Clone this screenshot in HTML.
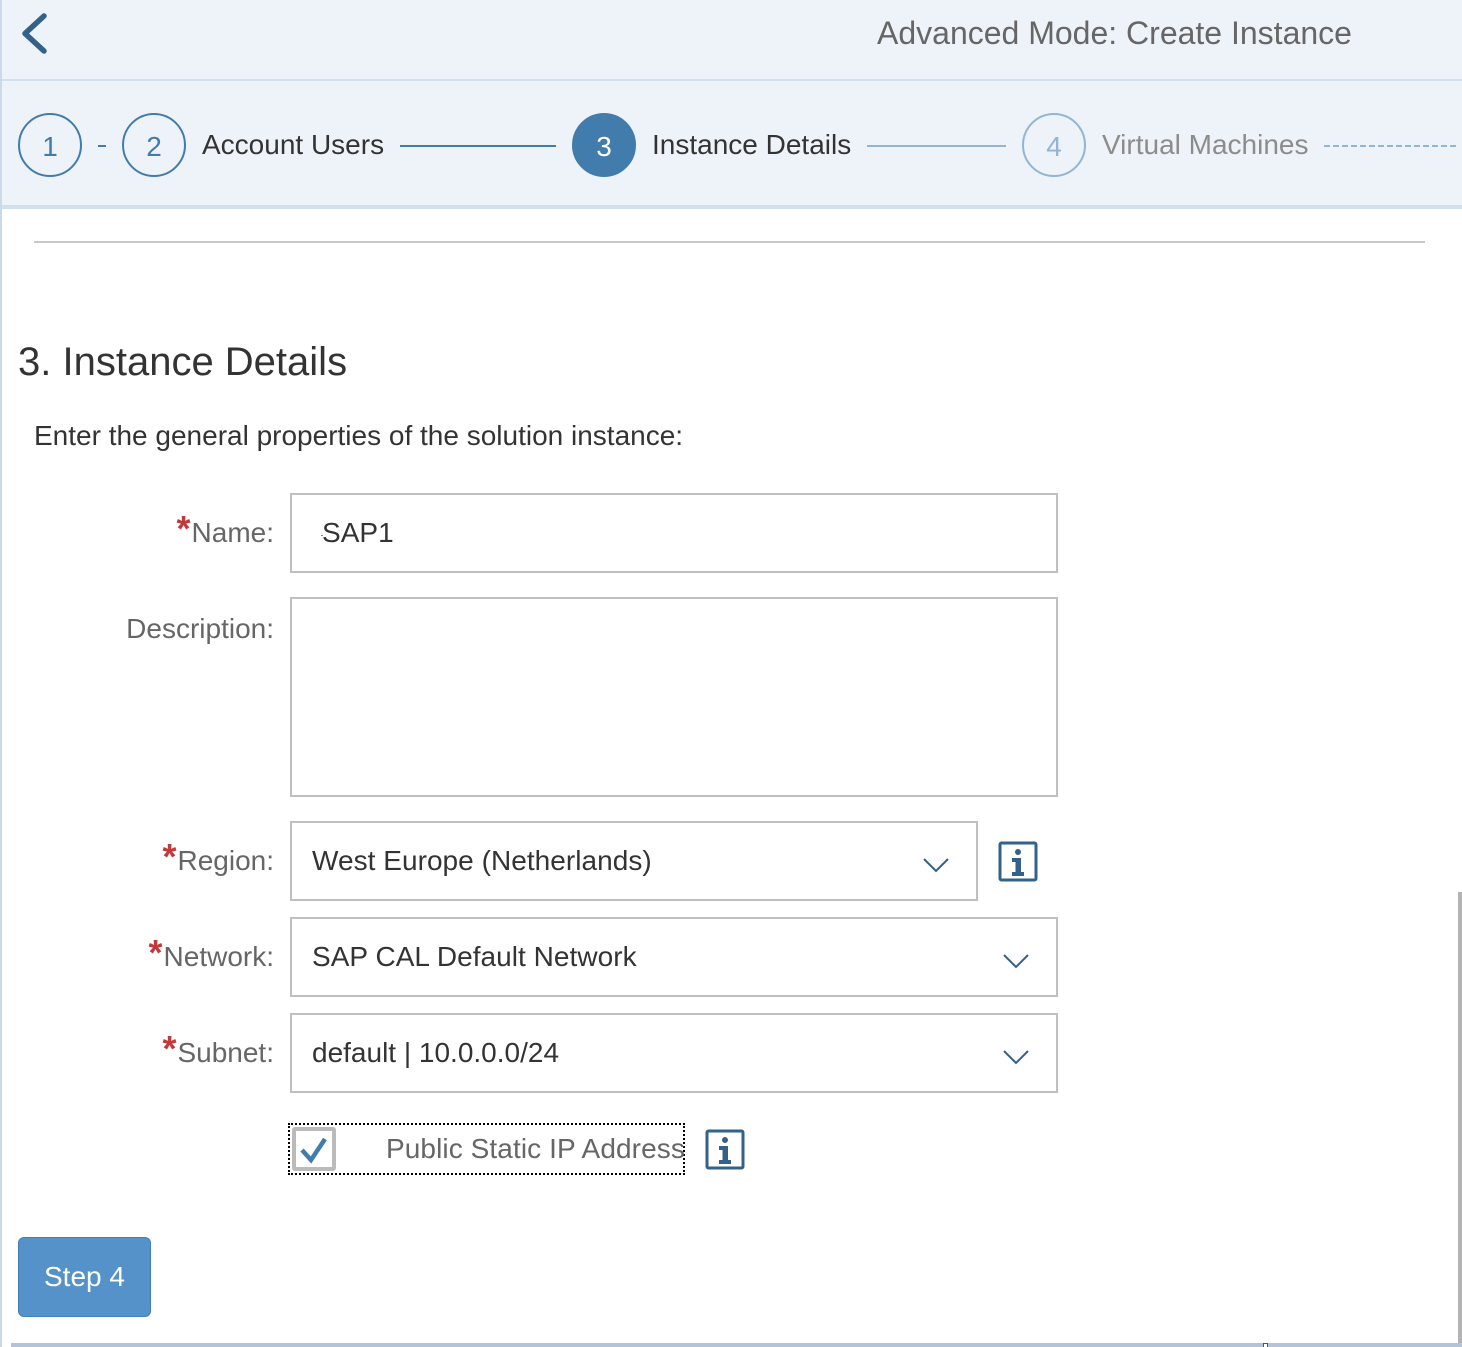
<!DOCTYPE html>
<html><head><meta charset="utf-8"><style>
html,body{margin:0;padding:0;width:1462px;height:1347px;overflow:hidden;background:#fff;font-family:"Liberation Sans",Arial,sans-serif}
.a{position:absolute;box-sizing:border-box}
.t{position:absolute;white-space:nowrap;line-height:40px;height:40px}
.c{position:absolute;box-sizing:border-box;width:64px;height:64px;border-radius:50%;border:2px solid #427cac;text-align:center;line-height:63px;font-size:28px;color:#427cac;top:113px}
.l{font-size:28px;color:#666;right:1188px}
.star{color:#c0393d;font-size:36px;font-weight:bold;line-height:34px;position:relative;top:-1px;display:inline-block;height:28px;vertical-align:baseline;margin-right:1px}
.box{position:absolute;box-sizing:border-box;border:2px solid #bfbfbf;background:#fff}
.v{font-size:28px;color:#333;letter-spacing:.04px}
</style></head><body>
<div class="a" style="left:0;top:0;width:1462px;height:209px;background:#eef3fa"></div>
<div class="a" style="left:0;top:79px;width:1462px;height:2px;background:#d1dfee"></div>
<div class="a" style="left:0;top:205px;width:1462px;height:4px;background:#d1dfee"></div>
<div class="a" style="left:0;top:0;width:2px;height:1347px;background:#ccd9ea"></div>
<div class="a" style="left:1458px;top:892px;width:4px;height:451px;background:#b3b3b3"></div>
<div class="a" style="left:11px;top:1343px;width:1451px;height:4px;background:#b4c3d8"></div>
<div class="a" style="left:1263px;top:1343px;width:5px;height:4px;background:#fff;border:1px solid #555;border-bottom:0"></div>

<svg class="a" style="left:18px;top:10px" width="32" height="48"><path d="M26 6 L7 23.5 L26 41" fill="none" stroke="#346187" stroke-width="5.5" stroke-linecap="round" stroke-linejoin="round"/></svg>
<div class="t" style="left:877px;top:13px;font-size:32px;color:#666">Advanced Mode: Create Instance</div>

<div class="c" style="left:18px">1</div>
<div class="a" style="left:98px;top:145px;width:8px;height:2px;background:#427cac"></div>
<div class="c" style="left:122px">2</div>
<div class="t" style="left:202px;top:125px;font-size:28px;color:#333">Account Users</div>
<div class="a" style="left:400px;top:145px;width:156px;height:2px;background:#427cac"></div>
<div class="c" style="left:572px;background:#427cac;color:#fff">3</div>
<div class="t" style="left:652px;top:125px;font-size:28px;color:#333">Instance Details</div>
<div class="a" style="left:867px;top:145px;width:139px;height:2px;background:#91b5d3"></div>
<div class="c" style="left:1022px;border-color:#91b5d3;color:#91b5d3">4</div>
<div class="t" style="left:1102px;top:125px;font-size:28px;color:#8c8c8c">Virtual Machines</div>
<svg class="a" style="left:1324px;top:145px" width="134" height="2"><line x1="0" y1="1" x2="134" y2="1" stroke="#91b5d3" stroke-width="2" stroke-dasharray="6 3"/></svg>

<div class="a" style="left:34px;top:241px;width:1391px;height:2px;background:#c8c8c8"></div>
<div class="t" style="left:18px;top:342px;font-size:40px;color:#333">3. Instance Details</div>
<div class="t" style="left:34px;top:416px;font-size:28px;color:#333">Enter the general properties of the solution instance:</div>

<div class="t l" style="top:513px"><span class="star">*</span>Name:</div>
<div class="box" style="left:290px;top:493px;width:768px;height:80px"></div>
<div class="t v" style="left:322px;top:513px">SAP1</div>
<div class="a" style="left:321px;top:535px;width:2px;height:1px;background:#888"></div>

<div class="t l" style="top:609px">Description:</div>
<div class="box" style="left:290px;top:597px;width:768px;height:200px"></div>

<div class="t l" style="top:841px"><span class="star">*</span>Region:</div>
<div class="box" style="left:290px;top:821px;width:688px;height:80px"></div>
<div class="t v" style="left:312px;top:841px">West Europe (Netherlands)</div>
<svg class="a" style="left:922px;top:856px" width="28" height="18"><path d="M2 3 L14 15 L26 3" fill="none" stroke="#346187" stroke-width="2"/></svg>
<svg class="a" style="left:998px;top:840px" width="40" height="42"><rect x="2" y="3" width="36" height="37" rx="1.5" fill="none" stroke="#346187" stroke-width="3"/><circle cx="20" cy="12" r="3" fill="#346187"/><path d="M14 18H23V32H26V36H14V32H17.5V22H14Z" fill="#346187"/></svg>

<div class="t l" style="top:937px"><span class="star">*</span>Network:</div>
<div class="box" style="left:290px;top:917px;width:768px;height:80px"></div>
<div class="t v" style="left:312px;top:937px">SAP CAL Default Network</div>
<svg class="a" style="left:1002px;top:952px" width="28" height="18"><path d="M2 3 L14 15 L26 3" fill="none" stroke="#346187" stroke-width="2"/></svg>

<div class="t l" style="top:1033px"><span class="star">*</span>Subnet:</div>
<div class="box" style="left:290px;top:1013px;width:768px;height:80px"></div>
<div class="t v" style="left:312px;top:1033px;letter-spacing:0">default | 10.0.0.0/24</div>
<svg class="a" style="left:1002px;top:1048px" width="28" height="18"><path d="M2 3 L14 15 L26 3" fill="none" stroke="#346187" stroke-width="2"/></svg>

<div class="a" style="left:288px;top:1123px;width:397px;height:52px;border:2px dotted #000"></div>
<div class="a" style="left:292px;top:1127px;width:44px;height:44px;border:4px solid #bbb;border-radius:3px;background:#fff"></div>
<svg class="a" style="left:292px;top:1127px" width="44" height="44"><path d="M10 23 L19 33 L33 12" fill="none" stroke="#427cac" stroke-width="4.5"/></svg>
<div class="t" style="left:386px;top:1129px;font-size:28px;color:#666;letter-spacing:.09px">Public Static IP Address</div>
<svg class="a" style="left:705px;top:1128px" width="40" height="42"><rect x="2" y="3" width="36" height="37" rx="1.5" fill="none" stroke="#346187" stroke-width="3"/><circle cx="20" cy="12" r="3" fill="#346187"/><path d="M14 18H23V32H26V36H14V32H17.5V22H14Z" fill="#346187"/></svg>

<div class="a" style="left:18px;top:1237px;width:133px;height:80px;background:#5592c9;border:1px solid #427fb9;border-radius:6px"></div>
<div class="t" style="left:44px;top:1257px;font-size:28px;color:#fff">Step 4</div>
</body></html>
